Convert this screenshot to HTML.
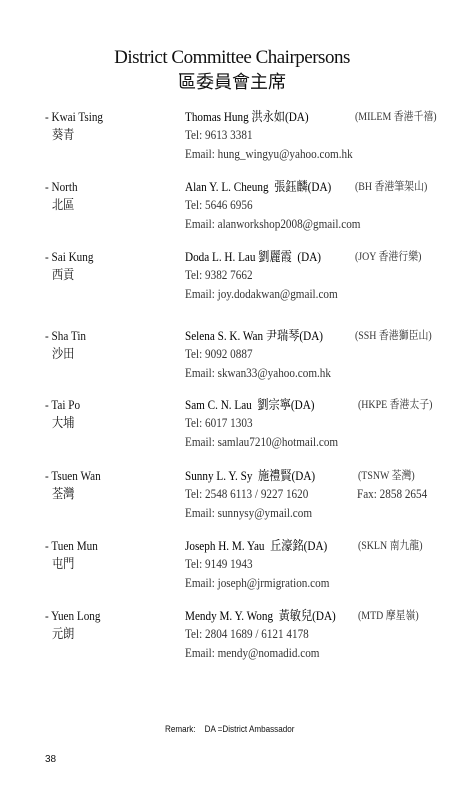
<!DOCTYPE html>
<html><head><meta charset="utf-8"><style>
body{margin:0;width:464px;height:793px;background:#fff;position:relative;overflow:hidden;color:#111;font-family:"Liberation Serif","Noto Serif CJK SC",serif}
.t{position:absolute;white-space:nowrap;font-size:13px;line-height:16px;transform:scaleX(.86);transform-origin:0 0}
.n{font-weight:normal;color:#000}
.g{color:#333}
.s{font-size:11.5px;color:#333}
</style></head><body>
<div class="t" style="left:0;width:464px;top:47px;font-size:19px;line-height:22px;transform:none;text-align:center;letter-spacing:-0.5px">District Committee Chairpersons</div>
<div class="t" style="left:0;width:464px;top:70px;font-size:18px;line-height:22px;transform:none;text-align:center;font-family:'Noto Sans CJK TC',sans-serif">區委員會主席</div>

<div class="t" style="left:45px;top:109px">- Kwai Tsing</div><div class="t" style="left:52px;top:127px">葵青</div>
<div class="t n" style="left:185px;top:109px">Thomas Hung 洪永如(DA)</div><div class="t s" style="left:355px;top:109px">(MILEM 香港千禧)</div>
<div class="t g" style="left:185px;top:127px">Tel: 9613 3381</div><div class="t g" style="left:185px;top:146px">Email: hung_wingyu@yahoo.com.hk</div>

<div class="t" style="left:45px;top:179px">- North</div><div class="t" style="left:52px;top:197px">北區</div>
<div class="t n" style="left:185px;top:179px">Alan Y. L. Cheung&nbsp; 張鈺麟(DA)</div><div class="t s" style="left:355px;top:179px">(BH 香港筆架山)</div>
<div class="t g" style="left:185px;top:197px">Tel: 5646 6956</div><div class="t g" style="left:185px;top:216px">Email: alanworkshop2008@gmail.com</div>

<div class="t" style="left:45px;top:249px">- Sai Kung</div><div class="t" style="left:52px;top:267px">西貢</div>
<div class="t n" style="left:185px;top:249px">Doda L. H. Lau 劉麗霞&nbsp; (DA)</div><div class="t s" style="left:355px;top:249px">(JOY 香港行樂)</div>
<div class="t g" style="left:185px;top:267px">Tel: 9382 7662</div><div class="t g" style="left:185px;top:286px">Email: joy.dodakwan@gmail.com</div>

<div class="t" style="left:45px;top:328px">- Sha Tin</div><div class="t" style="left:52px;top:346px">沙田</div>
<div class="t n" style="left:185px;top:328px">Selena S. K. Wan 尹瑞琴(DA)</div><div class="t s" style="left:355px;top:328px">(SSH 香港獅臣山)</div>
<div class="t g" style="left:185px;top:346px">Tel: 9092 0887</div><div class="t g" style="left:185px;top:365px">Email: skwan33@yahoo.com.hk</div>

<div class="t" style="left:45px;top:397px">- Tai Po</div><div class="t" style="left:52px;top:415px">大埔</div>
<div class="t n" style="left:185px;top:397px">Sam C. N. Lau&nbsp; 劉宗寧(DA)</div><div class="t s" style="left:358px;top:397px">(HKPE 香港太子)</div>
<div class="t g" style="left:185px;top:415px">Tel: 6017 1303</div><div class="t g" style="left:185px;top:434px">Email: samlau7210@hotmail.com</div>

<div class="t" style="left:45px;top:468px">- Tsuen Wan</div><div class="t" style="left:52px;top:486px">荃灣</div>
<div class="t n" style="left:185px;top:468px">Sunny L. Y. Sy&nbsp; 施禮賢(DA)</div><div class="t s" style="left:358px;top:468px">(TSNW 荃灣)</div>
<div class="t g" style="left:185px;top:486px">Tel: 2548 6113 / 9227 1620</div><div class="t g" style="left:357px;top:486px">Fax: 2858 2654</div><div class="t g" style="left:185px;top:505px">Email: sunnysy@ymail.com</div>

<div class="t" style="left:45px;top:538px">- Tuen Mun</div><div class="t" style="left:52px;top:556px">屯門</div>
<div class="t n" style="left:185px;top:538px">Joseph H. M. Yau&nbsp; 丘濠銘(DA)</div><div class="t s" style="left:358px;top:538px">(SKLN 南九龍)</div>
<div class="t g" style="left:185px;top:556px">Tel: 9149 1943</div><div class="t g" style="left:185px;top:575px">Email: joseph@jrmigration.com</div>

<div class="t" style="left:45px;top:608px">- Yuen Long</div><div class="t" style="left:52px;top:626px">元朗</div>
<div class="t n" style="left:185px;top:608px">Mendy M. Y. Wong&nbsp; 黃敏兒(DA)</div><div class="t s" style="left:358px;top:608px">(MTD 摩星嶺)</div>
<div class="t g" style="left:185px;top:626px">Tel: 2804 1689 / 6121 4178</div><div class="t g" style="left:185px;top:645px">Email: mendy@nomadid.com</div>

<div class="t" style="left:165px;top:721px;font-family:'Liberation Sans',sans-serif;font-size:9px;transform:scaleX(.9)">Remark:&nbsp;&nbsp;&nbsp; DA =District Ambassador</div>
<div class="t" style="left:45px;top:752px;font-family:'Liberation Sans',sans-serif;font-size:10px;transform:none">38</div>
</body></html>
